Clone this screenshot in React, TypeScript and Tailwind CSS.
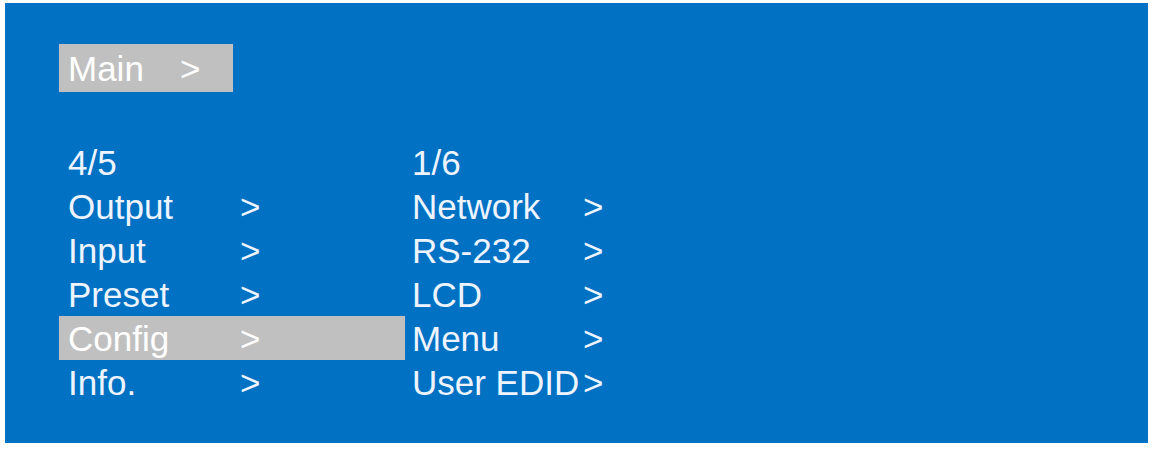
const left = ["Output", "Input", "Preset", "Config", "Info."];
const right = ["Network", "RS-232", "LCD", "Menu", "User EDID"];

function Row({ label, active, pad, w }: { label: string; active?: boolean; pad: string; w: string }) {
  return (
    <div className={`flex h-[44px] items-center ${pad} ${active ? "bg-[#c0c0c0] text-white" : ""}`}>
      <span className={`${w} whitespace-nowrap`}>{label}</span>
      <span>&gt;</span>
    </div>
  );
}

export default function App() {
  return (
    <div className="h-[452px] w-[1158px] bg-white pl-[5px] pt-[3px]">
      <div
        className="h-[440px] w-[1143px] bg-[#0171c3] text-[35px] leading-none text-[#eef4ff]"
        style={{ fontFamily: '"Liberation Sans", Arial, sans-serif' }}
      >
        <div className="ml-[54px] pt-[41px]">
          <div className="flex h-[48px] w-[174px] items-center bg-[#c0c0c0] pl-[9px] text-white">
            <span className="w-[112px]">Main</span>
            <span>&gt;</span>
          </div>
        </div>

        <div className="ml-[54px] mt-[48px] flex">
          <div className="w-[346px]">
            <div className="flex h-[44px] items-center pl-[9px]">4/5</div>
            {left.map((l) => (
              <Row key={l} label={l} active={l === "Config"} pad="pl-[9px]" w="w-[172px]" />
            ))}
          </div>
          <div>
            <div className="flex h-[44px] items-center pl-[7px]">1/6</div>
            {right.map((r) => (
              <Row key={r} label={r} pad="pl-[7px]" w="min-w-[171px]" />
            ))}
          </div>
        </div>
      </div>
    </div>
  );
}
